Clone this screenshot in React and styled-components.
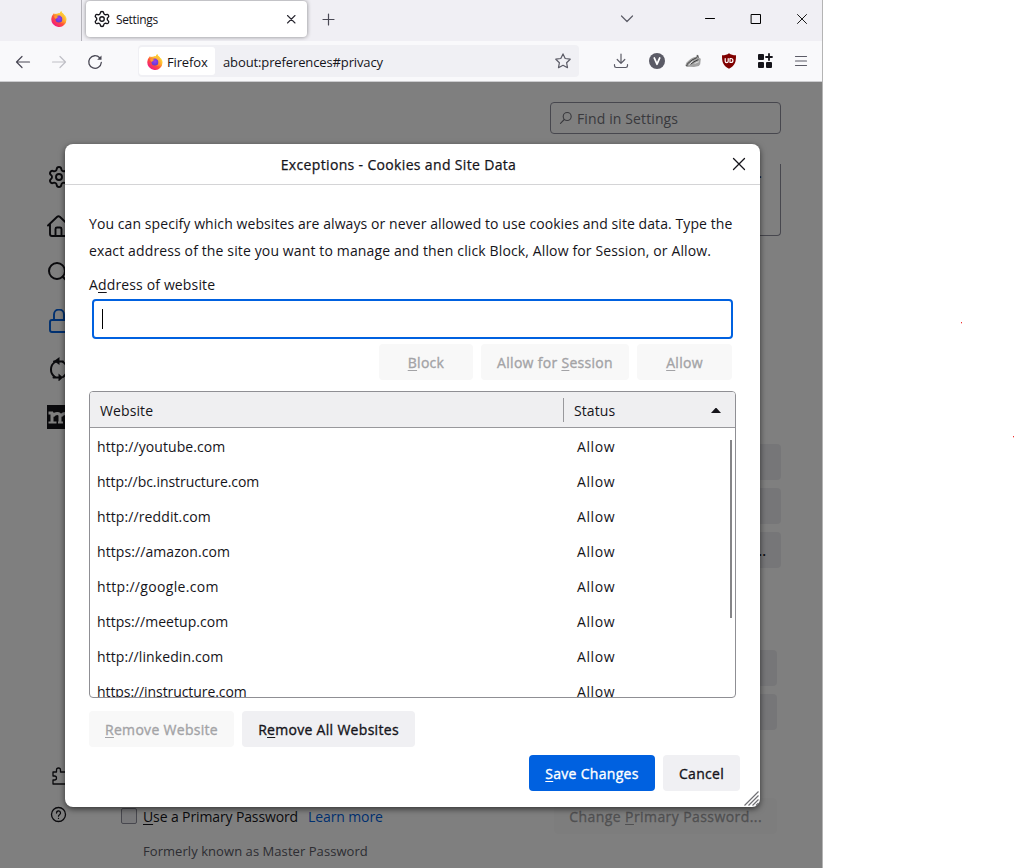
import React from "react";
import styled, { createGlobalStyle, css } from "styled-components";
import { Settings } from "lucide-react";

const GlobalStyle = createGlobalStyle`
  *, *::before, *::after { box-sizing: border-box; }
  body {
    margin: 0;
    background: #fff;
    font-family: "Segoe UI", "Open Sans", "Noto Sans", sans-serif;
    font-size: 14px;
    color: #15141a;
  }
  u { text-decoration-thickness: 1px; text-underline-offset: 2px; }
`;

const Stage = styled.div`
  position: relative;
  width: 1015px;
  height: 868px;
  overflow: hidden;
`;

const Speck = styled.i`
  position: absolute;
  left: ${(p) => p.$x}px;
  top: ${(p) => p.$y}px;
  width: 1px;
  height: 1px;
  background: #e33;
  box-shadow: 0 1px #fbb;
`;

const Window = styled.div`
  display: flex;
  flex-direction: column;
  width: 823px;
  height: 868px;
  border-right: 1px solid #b4b4b4;
`;

const TabBar = styled.div`
  display: flex;
  height: 41px;
  background: #f0eff4;
`;

const PinnedTab = styled.div`
  width: 82px;
  padding: 11px 0 0 51px;
  border-right: 1px solid #b5b4bb;
`;

const Tab = styled.div`
  display: flex;
  align-items: center;
  width: 222px;
  height: 36px;
  margin: 1px 0 0 4px;
  padding: 0 10px 0 7px;
  border-radius: 4px;
  background: #fff;
  box-shadow: 0 0 4px rgba(0, 0, 0, 0.45);
`;

const TabTitle = styled.span`
  flex: 1;
  margin-left: 5px;
  font-size: 12px;
  letter-spacing: -0.3px;
`;

const TabBarTools = styled.div`
  display: flex;
  flex: 1;
  align-items: flex-start;
  padding: 11px 12px 0 13px;
  svg { flex: none; }
`;

const WindowButtons = styled.div`
  display: flex;
  gap: 30px;
  margin-left: 67px;
`;

const NavBar = styled.div`
  display: flex;
  align-items: center;
  height: 41px;
  padding: 0 13px 0 15px;
  background: #f9f9fb;
  border-bottom: 1px solid #cccccf;
`;

const NavButtons = styled.div`
  display: flex;
  gap: 20px;
  width: 123px;
  padding-top: 1px;
`;

const UrlBar = styled.div`
  display: flex;
  align-items: center;
  width: 441px;
  height: 32px;
  padding: 1px 8px 1px 1px;
  border-radius: 4px;
  background: #f0f0f4;
`;

const Identity = styled.div`
  display: flex;
  align-items: center;
  gap: 4px;
  width: 76px;
  height: 28px;
  padding: 1px 0 0 8px;
  border-radius: 3px;
  background: #fff;
  font-size: 13px;
  letter-spacing: -0.15px;
`;

const Url = styled.span`
  flex: 1;
  margin-left: 8px;
  padding-top: 2px;
  font-size: 13px;
  letter-spacing: -0.12px;
`;

const Extensions = styled.div`
  display: flex;
  gap: 20px;
  margin-left: 34px;
`;

const Page = styled.div`
  position: relative;
  display: flex;
  flex: 1;
  background: #fff;
  overflow: hidden;
`;

const Sidebar = styled.div`
  display: flex;
  flex-direction: column;
  width: 121px;
  height: 786px;
  padding: 83px 0 0 47px;
  svg { display: block; flex: none; }
`;

const SideItem = styled.div`
  height: 24px;
  margin-bottom: ${(p) => p.$gap}px;
`;

const Main = styled.div`
  display: flex;
  flex-direction: column;
  align-items: flex-end;
  width: 660px;
  padding-top: 20px;
`;

const FindBox = styled.div`
  display: flex;
  align-items: center;
  gap: 4px;
  width: 231px;
  height: 32px;
  padding-left: 8px;
  border: 1px solid #8f8f9d;
  border-radius: 4px;
  color: #72727a;
  letter-spacing: 0.12px;
`;

const Notice = styled.div`
  width: 600px;
  height: 72px;
  margin: 30px 0 208px;
  border: 1px solid #8f8f9d;
  border-top: 0;
  border-radius: 0 0 4px 4px;
  text-align: right;
  padding: 0 18px 0 0;
  line-height: 18px;
`;

const Stack = styled.div`
  display: flex;
  flex-direction: column;
  gap: 8px;
  margin: 0 ${(p) => p.$inset || 0}px ${(p) => p.$gap}px 0;
`;

const PageButton = styled.div`
  width: 223px;
  height: 36px;
  padding: 0 15px;
  border-radius: 4px;
  background: #ededf0;
  font-weight: 600;
  line-height: 38px;
  text-align: right;
  white-space: nowrap;
  ${(p) => p.$disabled && css`
    background: #fbfbfb;
    color: #a0a0a3;
    font-weight: 400;
    -webkit-text-stroke: 0.3px;
    letter-spacing: 0.42px;
  `}
`;

const PasswordRow = styled.div`
  display: flex;
  align-items: flex-start;
  width: 100%;
  height: 36px;
  padding-right: 4px;
`;

const CheckBox = styled.div`
  width: 16px;
  height: 16px;
  margin: 10px 6px 0 0;
  border: 1px solid #8f8f9d;
  border-radius: 2px;
  background: #f0f0f4;
`;

const CheckText = styled.div`
  flex: 1;
  padding-top: 9px;
  line-height: 20px;
  letter-spacing: -0.12px;
`;

const Link = styled.a`
  margin-left: 10px;
  color: #0061e0;
`;

const Hint = styled.div`
  width: 638px;
  margin-top: 7px;
  color: #5b5b66;
  font-size: 13px;
  line-height: 20px;
  letter-spacing: 0.06px;
`;

const Backdrop = styled.div`
  position: absolute;
  inset: 0;
  background: rgba(0, 0, 0, 0.5);
`;

const Dialog = styled.div`
  position: absolute;
  left: 65px;
  top: 62px;
  width: 695px;
  height: 663px;
  border-radius: 8px;
  background: #fff;
  box-shadow: 0 2px 6px rgba(0, 0, 0, 0.6);
`;

const DialogHeader = styled.div`
  display: flex;
  align-items: center;
  height: 41px;
  padding: 0 13px 0 0;
  border-bottom: 1px solid #d4d4d6;
`;

const DialogTitle = styled.div`
  flex: 1;
  padding-left: 1px;
  text-align: center;
  -webkit-text-stroke: 0.25px;
  letter-spacing: 0.34px;
`;

const DialogBody = styled.div`
  padding: 25px 24px 0;
`;

const Intro = styled.p`
  margin: 0;
  line-height: 27px;
  white-space: nowrap;
`;

const IntroLine = styled.span`
  display: block;
  letter-spacing: ${(p) => p.$ls}px;
`;

const Label = styled.div`
  margin-top: 11px;
  line-height: 20px;
  letter-spacing: 0.14px;
`;

const Field = styled.div`
  width: 641px;
  height: 40px;
  margin: 4px 0 0 3px;
  padding: 8px;
  border: 2px solid #0061e0;
  border-radius: 4px;
`;

const Caret = styled.div`
  width: 1px;
  height: 20px;
  background: #000;
`;

const ButtonRow = styled.div`
  display: flex;
  gap: 8px;
  justify-content: ${(p) => (p.$end ? "flex-end" : "flex-start")};
  margin: ${(p) => p.$margin};
`;

const Button = styled.button`
  width: ${(p) => p.$w}px;
  height: 36px;
  padding: 0;
  border: 0;
  border-radius: 4px;
  background: ${(p) => (p.$primary ? "#0061e0" : p.disabled ? "#f8f8f8" : "#f0f0f3")};
  color: ${(p) => (p.$primary ? "#fff" : p.disabled ? "#a3a3a6" : "#15141a")};
  font: 400 14px "Segoe UI", "Open Sans", "Noto Sans", sans-serif;
  -webkit-text-stroke: 0.35px;
  letter-spacing: 0.3px;
  white-space: nowrap;
`;

const Table = styled.div`
  position: relative;
  width: 647px;
  height: 307px;
  margin-top: 11px;
  border: 1px solid #8f8f94;
  border-radius: 4px;
  overflow: hidden;
`;

const TableHead = styled.div`
  display: flex;
  align-items: center;
  height: 36px;
  margin-bottom: 1px;
  padding-left: 10px;
  background: #efeff1;
  border-bottom: 1px solid #98989c;
`;

const HeadCell = styled.div`
  display: flex;
  align-items: center;
  justify-content: space-between;
  height: 24px;
  width: ${(p) => p.$w}px;
  padding-top: 1px;
  letter-spacing: 0.1px;
  ${(p) => p.$divided && css`
    padding: 1px 14px 0 10px;
    border-left: 1px solid #98989c;
  `}
`;

const Row = styled.div`
  display: flex;
  height: 35px;
  padding-left: 7px;
  line-height: 35px;
`;

const Site = styled.div`
  width: 480px;
  letter-spacing: ${(p) => p.$ls}px;
`;

const Status = styled.div`
  letter-spacing: 0.6px;
`;

const ScrollThumb = styled.div`
  position: absolute;
  right: 3px;
  top: 48px;
  width: 2px;
  height: 178px;
  background: #858588;
`;

const Resizer = styled.svg`
  position: absolute;
  right: 1px;
  bottom: 1px;
`;

const Icon = ({ size = 16, children, color = "#5b5b66", sw = 1.2, ...rest }) => (
  <svg width={size} height={size} viewBox={`0 0 ${size} ${size}`} fill="none" stroke={color}
    strokeWidth={sw} strokeLinecap="round" strokeLinejoin="round" {...rest}>{children}</svg>
);

const FirefoxLogo = ({ id }) => (
  <svg width="16" height="16" viewBox="0 0 16 16">
    <defs>
      <linearGradient id={`${id}a`} x1="0.85" y1="0.1" x2="0.2" y2="0.95">
        <stop offset="0" stopColor="#fff44f" />
        <stop offset="0.35" stopColor="#ffb52e" />
        <stop offset="0.6" stopColor="#ff5038" />
        <stop offset="1" stopColor="#f0148a" />
      </linearGradient>
      <linearGradient id={`${id}b`} x1="0.7" y1="0" x2="0.3" y2="1">
        <stop offset="0" stopColor="#ffe23c" />
        <stop offset="1" stopColor="#ff7a2c" />
      </linearGradient>
      <radialGradient id={`${id}c`} cx="0.5" cy="0.4" r="0.6">
        <stop offset="0" stopColor="#a03cf0" />
        <stop offset="1" stopColor="#5b3cd0" />
      </radialGradient>
    </defs>
    <path fill={`url(#${id}a)`} d="M2 3.6C2.2 2.9 2.7 2.3 3.2 2c0 .6.1 1 .4 1.3C4.5 2.8 5.4 2.7 6 2.8 7 2 8.500 2 9 2.200 9.100 1.200 9.800.5 10.300 0c.2 1.400 1.200 2 2.200 3 .4.4.7.9.9 1.300l.5-.1c1 1.300 1.600 2.700 1.600 4.200A7.600 7.600 0 1 1 .4 7.200C.6 5.800 1.200 4.500 2 3.600z" />
    <circle cx="8" cy="8.100" r="3.500" fill={`url(#${id}c)`} />
    <path fill={`url(#${id}b)`} d="M9 2.200C9.100 1.200 9.800.5 10.300 0c.2 1.400 1.200 2 2.200 3 1.600 1.700 1.900 4.800.6 7-1 1.600-3 2.400-4.800 2 2-.1 3.300-1.700 3.300-3.500 0-1.900-1-3-2.400-3.400C10 4.400 9.500 3.300 9 2.200z" />
    <path fill="#ff9a30" d="M3.200 5.200c.9-.6 2-.5 2.700 0 .4.2 1 .2 1.500.3-.1.600-.8.9-1.400 1.200-.4.400-.3.800-.9 1.100C4 8 3.200 6.600 3.200 5.200z" />
  </svg>
);

const sites = [
  { url: "http://youtube.com", ls: 0.08 },
  { url: "http://bc.instructure.com", ls: -0.06 },
  { url: "http://reddit.com", ls: 0.1 },
  { url: "https://amazon.com", ls: 0.08 },
  { url: "http://google.com", ls: 0.32 },
  { url: "https://meetup.com", ls: 0.05 },
  { url: "http://linkedin.com", ls: 0.1 },
  { url: "https://instructure.com", ls: -0.08 },
];

const Toolbar = () => (
  <>
    <TabBar>
      <PinnedTab><FirefoxLogo id="pin" /></PinnedTab>
      <Tab>
        <Settings size={18} strokeWidth={1.8} />
        <TabTitle>Settings</TabTitle>
        <Icon size={12} color="#2b2a33" sw={1.100}><path d="M2.500 2.500l7.500 7.500M10 2.500L2.500 10" /></Icon>
      </Tab>
      <TabBarTools>
        <Icon color="#4a4955"><path d="M8.500 3v11M3 8.500h11" /></Icon>
        <Icon style={{ marginLeft: 283 }}><path d="M2.500 5l5.500 5.500L13.500 5" /></Icon>
        <WindowButtons>
          <Icon color="#000" sw={1}><path d="M3.500 7.500h9" /></Icon>
          <Icon color="#000" sw={1}><path d="M3.500 3.500h9v9h-9z" /></Icon>
          <Icon color="#000" sw={0.900}><path d="M3.500 3.500l9 9M12.500 3.500l-9 9" /></Icon>
        </WindowButtons>
      </TabBarTools>
    </TabBar>
    <NavBar>
      <NavButtons>
        <Icon color="#4a4955"><path d="M14.500 8h-13M7 2.500L1.500 8 7 13.500" /></Icon>
        <Icon color="#c0c0c6"><path d="M1.500 8h13M9 2.500L14.500 8 9 13.500" /></Icon>
        <Icon color="#4a4955" sw={1.300}>
          <path d="M14.300 8.500A6.300 6.300 0 1 1 12.700 3.800" />
          <path d="M14.500 1.500v4.300h-4.300z" fill="#4a4955" stroke="none" />
        </Icon>
      </NavButtons>
      <UrlBar>
        <Identity><FirefoxLogo id="url" />Firefox</Identity>
        <Url>about:preferences#privacy</Url>
        <Icon><path d="M8 .9l2.200 4.600 5 .7-3.600 3.500.9 5L8 12.300l-4.500 2.400.9-5L.8 6.200l5-.7z" /></Icon>
      </UrlBar>
      <Extensions>
        <Icon><path d="M8 1v9M4.200 6.500L8 10.300l3.800-3.800M1.500 11.500v1.300c0 1 .7 1.700 1.700 1.700h9.600c1 0 1.700-.7 1.700-1.700v-1.300" /></Icon>
        <Icon stroke="none">
          <circle cx="8" cy="8" r="8" fill="#5b5b66" />
          <path d="M5.300 5L8 11.200 10.700 5" stroke="#fff" strokeWidth="1.800" />
        </Icon>
        <Icon stroke="none">
          <path fill="#a3a3a3" d="M.3 12.500l1.200-3L4 7.200C6 5.200 8 4.300 11 3.700l.8-2 1.700.4.300 2.500 2 1.200-.6 5.400-1.400 1.900-4.900.8-3.700-.2-3.400.2z" />
          <path d="M2.500 10.800L7 7l4.500-2.200M6 11l3-2.200 4-2M12.500 2.700l.6 1.500M1.500 12.300l1-.3" stroke="#3c3c3c" strokeWidth="1" />
          <path d="M4.500 11.500l3-3M10 10.300l3.500-1.500" stroke="#e6e6e6" strokeWidth=".9" />
        </Icon>
        <Icon stroke="none">
          <path fill="#800000" d="M8 .2C9.800 1.600 12 2.300 15 2.300c0 7-.8 10-7 13.500C1.800 12.300 1 9.300 1 2.300 4 2.300 6.200 1.600 8 .2z" />
          <path d="M4.200 5.500v2.700c0 1.800 3 1.800 3 0V5.500M9 5.500v4h.9c2.700 0 2.700-4 0-4z" stroke="#fff" strokeWidth="1.200" />
        </Icon>
        <Icon stroke="none" fill="#15141a">
          <rect x="1" y="1" width="6" height="6" rx="1" />
          <rect x="1" y="9" width="6" height="6" rx="1" />
          <rect x="9" y="9" width="6" height="6" rx="1" />
          <path d="M12 1v6M9 4h6" stroke="#15141a" strokeWidth="1.800" />
        </Icon>
        <Icon sw={1.200}><path d="M2.500 3.500h11M2.500 8h11M2.500 12.500h11" /></Icon>
      </Extensions>
    </NavBar>
  </>
);

const Preferences = () => (
  <>
    <Sidebar>
      <SideItem $gap={25}><Settings size={24} strokeWidth={1.900} /></SideItem>
      <SideItem $gap={22}>
        <Icon size={24} color="#15141a" sw={1.900}>
          <path d="M1 11.500L10.200 2.800a2 2 0 0 1 2.600 0L22 11.500M3 10v10a2 2 0 0 0 2 2h14a2 2 0 0 0 2-2V10M8.500 22v-7a1.500 1.500 0 0 1 1.500-1.500h3a1.500 1.500 0 0 1 1.500 1.500v7" />
        </Icon>
      </SideItem>
      <SideItem $gap={25}>
        <Icon size={24} color="#15141a" sw={2}><circle cx="10" cy="11" r="8" /><path d="M15.700 16.700L22 23" /></Icon>
      </SideItem>
      <SideItem $gap={24}>
        <Icon size={24} color="#0061e0" sw={1.900}>
          <rect x="3" y="11" width="18" height="12" rx="2" />
          <path d="M7 11V5.500a5 5 0 0 1 10 0V11" />
        </Icon>
      </SideItem>
      <SideItem $gap={24}>
        <Icon size={24} color="#15141a" sw={2}>
          <path d="M8 20A9 9 0 0 1 8 5M16 5A9 9 0 0 1 16 20" />
          <path d="M12.500 0v8L7 4z" fill="#15141a" stroke="none" />
          <path d="M11.500 16.500v8l4.500-4z" fill="#15141a" stroke="none" />
          <path d="M7 4.500h9M6.500 20.500h5" strokeWidth="2" />
        </Icon>
      </SideItem>
      <SideItem $gap={336}>
        <Icon size={24} color="#fff" sw={3} strokeLinecap="butt">
          <path d="M0 0h24v24H0z" fill="#15141a" stroke="none" />
          <path d="M1.500 8H6M5 7v10M13 18V11c0-3.500-5-3.500-7 0M21 18v-7c0-3.500-5-3.500-7 0" />
          <path d="M1.500 17.500h8M11 17.500h5M18 17.500h5" strokeWidth="2" />
        </Icon>
      </SideItem>
      <SideItem $gap={17}>
        <Icon size={24} color="#15141a" sw={1.300}>
          <path d="M6 7h3.500V5a2 2 0 0 1 4 0v2H19v12H6v-4h1.500a2 2 0 0 0 0-4H6z" />
        </Icon>
      </SideItem>
      <SideItem $gap={0}>
        <Icon size={24} color="#15141a" sw={1.300}>
          <circle cx="11.500" cy="8.500" r="7" />
          <path d="M9.500 7a2 2 0 1 1 3 1.700c-.7.4-1 .8-1 1.500M11.500 12.300v.1" />
        </Icon>
      </SideItem>
    </Sidebar>
    <Main>
      <FindBox>
        <Icon size={14} color="#72727a" sw={1.100}><circle cx="8.200" cy="5.500" r="4" /><path d="M5.300 8.500L1.500 12.300" /></Icon>
        Find in Settings
      </FindBox>
      <Notice>.</Notice>
      <Stack $gap={82}>
        <PageButton />
        <PageButton />
        <PageButton>...</PageButton>
      </Stack>
      <Stack $inset={4} $gap={68}>
        <PageButton />
        <PageButton />
      </Stack>
      <PasswordRow>
        <CheckBox />
        <CheckText><u>U</u>se a Primary Password<Link>Learn more</Link></CheckText>
        <PageButton $disabled>Change <u>P</u>rimary Password...</PageButton>
      </PasswordRow>
      <Hint>Formerly known as Master Password</Hint>
    </Main>
  </>
);

const ExceptionsDialog = () => (
  <Dialog>
    <DialogHeader>
      <DialogTitle>Exceptions - Cookies and Site Data</DialogTitle>
      <Icon color="#15141a" sw={1.300}><path d="M2.500 2.500l11 11M13.500 2.500l-11 11" /></Icon>
    </DialogHeader>
    <DialogBody>
      <Intro>
        <IntroLine $ls={0.08}>You can specify which websites are always or never allowed to use cookies and site data. Type the</IntroLine>
        <IntroLine $ls={0.13}>exact address of the site you want to manage and then click Block, Allow for Session, or Allow.</IntroLine>
      </Intro>
      <Label>A<u>d</u>dress of website</Label>
      <Field><Caret /></Field>
      <ButtonRow $end $margin="5px 4px 0 0">
        <Button disabled $w={94}><span><u>B</u>lock</span></Button>
        <Button disabled $w={148}><span>Allow for <u>S</u>ession</span></Button>
        <Button disabled $w={95}><span><u>A</u>llow</span></Button>
      </ButtonRow>
      <Table>
        <TableHead>
          <HeadCell $w={463}>Website</HeadCell>
          <HeadCell $w={172} $divided>
            Status
            <svg width="10" height="5" viewBox="0 0 10 5"><path d="M0 5L4.500 0h1L10 5z" fill="#15141a" /></svg>
          </HeadCell>
        </TableHead>
        {sites.map((site) => (
          <Row key={site.url}><Site $ls={site.ls}>{site.url}</Site><Status>Allow</Status></Row>
        ))}
        <ScrollThumb />
      </Table>
      <ButtonRow $margin="13px 0 0">
        <Button disabled $w={145}><span><u>R</u>emove Website</span></Button>
        <Button $w={173}><span>R<u>e</u>move All Websites</span></Button>
      </ButtonRow>
      <ButtonRow $end $margin="8px -4px 0 0">
        <Button $primary $w={126}><span><u>S</u>ave Changes</span></Button>
        <Button $w={77}>Cancel</Button>
      </ButtonRow>
    </DialogBody>
    <Resizer width="15" height="15" viewBox="0 0 15 15">
      <path d="M.5 14.500l14-14M4.500 14.500l10-10M8.500 14.500l6-6M12 14.500l2.500-2.500" stroke="#707074" strokeWidth="1.200" />
    </Resizer>
  </Dialog>
);

export default function App() {
  return (
    <Stage>
      <GlobalStyle />
      <Window>
        <Toolbar />
        <Page>
          <Preferences />
          <Backdrop />
          <ExceptionsDialog />
        </Page>
      </Window>
      <Speck $x={961} $y={322} />
      <Speck $x={1013} $y={436} />
    </Stage>
  );
}
